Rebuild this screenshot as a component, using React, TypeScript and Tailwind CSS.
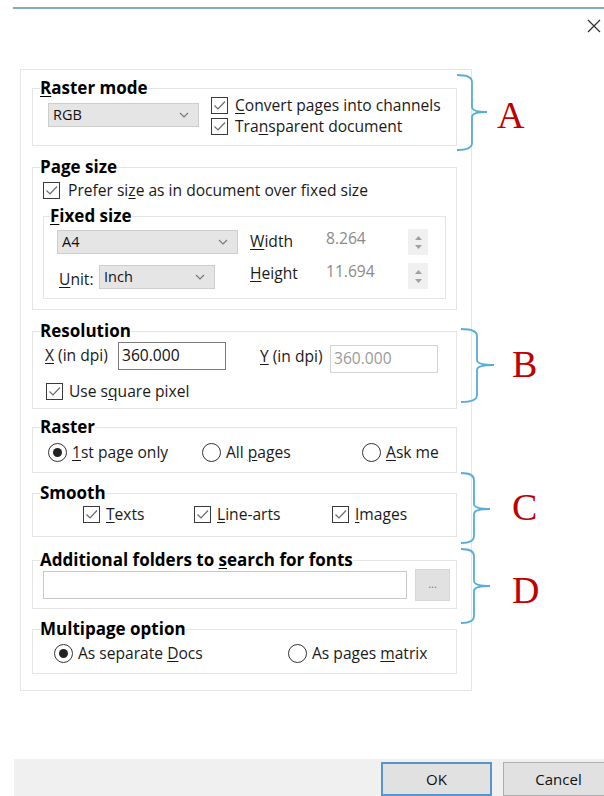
import type { ReactNode } from 'react';

function U({ children }: { children: ReactNode }) {
  return <span className="underline underline-offset-[2px]">{children}</span>;
}

function Check() {
  return (
    <div className="w-[17px] h-[17px] shrink-0 border border-[#3a3a3a] bg-white flex items-center justify-center">
      <svg width="15" height="15" viewBox="0 0 15 15">
        <polyline points="2.5,7.5 6,11 13,3.5" fill="none" stroke="#6a6a6a" strokeWidth="1.2" />
      </svg>
    </div>
  );
}

function Radio({ on }: { on?: boolean }) {
  return (
    <div className="w-[19px] h-[19px] shrink-0 rounded-full border border-[#333] bg-white flex items-center justify-center">
      {on && <div className="w-[9px] h-[9px] rounded-full bg-[#222]" />}
    </div>
  );
}

function Chevron() {
  return (
    <svg width="10" height="6" viewBox="0 0 10 6">
      <polyline points="1,1 5,5 9,1" fill="none" stroke="#777" strokeWidth="1.1" />
    </svg>
  );
}

function Select({ label, className }: { label: string; className: string }) {
  return (
    <div className={`h-[24px] shrink-0 bg-[#e5e5e5] border border-[#cdcdcd] flex items-center justify-between pl-[4px] pr-[9px] text-[14.5px] text-[#111] ${className}`}>
      <span>{label}</span>
      <Chevron />
    </div>
  );
}

function Spinner() {
  return (
    <div className="w-[20px] h-[26px] bg-[#f0f0f0] flex flex-col items-center justify-center gap-[5px]">
      <svg width="7" height="4" viewBox="0 0 7 4">
        <polygon points="0,4 3.5,0 7,4" fill="#a0a0a0" />
      </svg>
      <svg width="7" height="4" viewBox="0 0 7 4">
        <polygon points="0,0 3.5,4 7,0" fill="#a0a0a0" />
      </svg>
    </div>
  );
}

function Group({ title, className, legendClass, children }: { title: ReactNode; className: string; legendClass?: string; children: ReactNode }) {
  return (
    <fieldset className={`border border-[#e4e4e4] ${className}`}>
      <legend className={`text-[17px] font-bold leading-[18px] text-black ${legendClass ?? 'ml-[7px]'}`}>{title}</legend>
      {children}
    </fieldset>
  );
}

function Braces() {
  const brace = (y0: number, y1: number, ym: number, xl: number, xv: number, xp: number) =>
    `M ${xl} ${y0} Q ${xv} ${y0} ${xv} ${y0 + 7} L ${xv} ${ym - 5} Q ${xv} ${ym} ${xp} ${ym} Q ${xv} ${ym} ${xv} ${ym + 5} L ${xv} ${y1 - 7} Q ${xv} ${y1} ${xl} ${y1}`;
  return (
    <svg className="absolute left-0 top-0 pointer-events-none" width="604" height="796">
      <g fill="none" stroke="#58add6" strokeWidth="1.8">
        <path d={brace(75, 150, 112, 457, 472, 487)} />
        <path d={brace(329, 402, 365, 461, 477, 494)} />
        <path d={brace(473, 543, 509, 461, 474, 490)} />
        <path d={brace(549, 623, 586, 461, 474, 490)} />
      </g>
    </svg>
  );
}

export default function App() {
  const letter = "absolute text-[38px] leading-[38px] text-[#c00000] font-['Liberation_Serif',serif]";
  return (
    <div className="relative w-[604px] h-[796px] bg-white flex flex-col overflow-hidden font-['Open_Sans','Noto_Sans',sans-serif] text-[15.6px] text-[#1a1a1a]">
      <div className="ml-[13px] mt-[7px] h-[2px] bg-[#82aac0]" />
      <div className="flex justify-end pr-[3px] mt-[10px]">
        <svg width="14" height="14" viewBox="0 0 14 14">
          <path d="M1 1 L13 13 M13 1 L1 13" stroke="#333" strokeWidth="1.3" />
        </svg>
      </div>

      <div className="ml-[20px] mt-[36px] w-[452px] border border-[#e6e6e6] pl-[11px] pt-[9px] pb-[16px]">
        {/* Raster mode */}
        <Group title={<><U>R</U>aster mode</>} className="w-[425px] pb-[10px]">
          <div className="flex items-start">
            <Select label="RGB" className="mt-[6px] ml-[15px] w-[151px]" />
            <div className="ml-[12px] flex flex-col gap-[4px]">
              <div className="flex items-center h-[17px] gap-[7px]">
                <Check />
                <span><U>C</U>onvert pages into channels</span>
              </div>
              <div className="flex items-center h-[17px] gap-[7px]">
                <Check />
                <span>Tra<U>n</U>sparent document</span>
              </div>
            </div>
          </div>
        </Group>

        {/* Page size */}
        <Group title="Page size" className="w-[425px] mt-[12px] pb-[10px]">
          <div className="mt-[6px] ml-[10px] flex items-center h-[17px] gap-[8px]">
            <Check />
            <span>Prefer si<U>z</U>e as in document over fixed size</span>
          </div>
          <Group title={<><U>F</U>ixed size</>} className="w-[403px] ml-[10px] mt-[8px] pb-[9px]" legendClass="ml-[6px]">
            <div className="mt-[5px] flex items-center h-[24px]">
              <Select label="A4" className="ml-[13px] w-[181px]" />
              <span className="ml-[12px] w-[76px]"><U>W</U>idth</span>
              <span className="w-[82px] text-[#8a8a8a] -mt-[6px]">8.264</span>
              <Spinner />
            </div>
            <div className="mt-[11px] flex items-center h-[24px]">
              <span className="ml-[15px] w-[40px] mt-[6px]"><U>U</U>nit:</span>
              <Select label="Inch" className="w-[116px]" />
              <span className="ml-[35px] w-[76px] -mt-[6px]"><U>H</U>eight</span>
              <span className="w-[82px] text-[#8a8a8a] -mt-[10px]">11.694</span>
              <div className="-mt-[2px]">
                <Spinner />
              </div>
            </div>
          </Group>
        </Group>

        {/* Resolution */}
        <Group title="Resolution" className="w-[425px] mt-[12px] pb-[8px]">
          <div className="mt-[2px] flex items-start">
            <span className="ml-[12px] w-[73px] h-[28px] flex items-center"><U>X</U>&nbsp;(in dpi)</span>
            <div className="w-[108px] h-[28px] border border-[#7a7a7a] bg-white flex items-center pl-[3px] text-[#111]">360.000</div>
            <span className="ml-[34px] w-[70px] h-[28px] mt-[1px] flex items-center"><U>Y</U>&nbsp;(in dpi)</span>
            <div className="w-[108px] h-[28px] mt-[3px] border border-[#d2d2d2] bg-white flex items-center pl-[3px] text-[#9a9a9a]">360.000</div>
          </div>
          <div className="mt-[10px] ml-[13px] flex items-center h-[17px] gap-[6px]">
            <Check />
            <span>Use s<U>q</U>uare pixel</span>
          </div>
        </Group>

        {/* Raster */}
        <Group title="Raster" className="w-[425px] mt-[9px] pb-[10px]">
          <div className="mt-[7px] ml-[15px] flex items-center h-[19px]">
            <div className="w-[154px] flex items-center gap-[5px]">
              <Radio on />
              <span><U>1</U>st page only</span>
            </div>
            <div className="w-[160px] flex items-center gap-[5px]">
              <Radio />
              <span>All <U>p</U>ages</span>
            </div>
            <div className="flex items-center gap-[5px]">
              <Radio />
              <span><U>A</U>sk me</span>
            </div>
          </div>
        </Group>

        {/* Smooth */}
        <Group title="Smooth" className="w-[425px] mt-[11px] pb-[13px]">
          <div className="mt-[4px] ml-[50px] flex items-center h-[17px]">
            <div className="w-[111px] flex items-center gap-[6px]">
              <Check />
              <span><U>T</U>exts</span>
            </div>
            <div className="w-[138px] flex items-center gap-[6px]">
              <Check />
              <span><U>L</U>ine-arts</span>
            </div>
            <div className="flex items-center gap-[6px]">
              <Check />
              <span><U>I</U>mages</span>
            </div>
          </div>
        </Group>

        {/* Additional folders */}
        <Group title={<>Additional folders to <U>s</U>earch for fonts</>} className="w-[425px] mt-[14px] pb-[7px]">
          <div className="flex items-center">
            <div className="ml-[10px] w-[364px] h-[28px] border border-[#c8c8c8] bg-white" />
            <div className="ml-[8px] w-[35px] h-[32px] bg-[#e1e1e1] border border-[#d6d6d6] flex items-center justify-center text-[11px] text-[#777] pb-[2px]">...</div>
          </div>
        </Group>

        {/* Multipage */}
        <Group title="Multipage option" className="w-[425px] mt-[11px] pb-[10px]">
          <div className="mt-[6px] ml-[21px] flex items-center h-[19px]">
            <div className="w-[234px] flex items-center gap-[5px]">
              <Radio on />
              <span>As separate <U>D</U>ocs</span>
            </div>
            <div className="flex items-center gap-[5px]">
              <Radio />
              <span>As pages <U>m</U>atrix</span>
            </div>
          </div>
        </Group>
      </div>

      <div className="mt-auto ml-[14px] h-[37px] bg-[#f0f0f0] flex items-start overflow-hidden">
        <button className="ml-[367px] mt-[3px] w-[111px] h-[34px] shrink-0 bg-[#e1e1e1] border-2 border-[#5a94cc] text-[15px] text-[#111] flex items-center justify-center">OK</button>
        <button className="ml-[11px] mt-[3px] w-[111px] h-[34px] shrink-0 bg-[#e1e1e1] border border-[#adadad] text-[15px] text-[#111] flex items-center justify-center">Cancel</button>
      </div>

      <Braces />
      <span className={`${letter} left-[497px] top-[96px]`}>A</span>
      <span className={`${letter} left-[512px] top-[345px]`}>B</span>
      <span className={`${letter} left-[512px] top-[488px]`}>C</span>
      <span className={`${letter} left-[512px] top-[571px]`}>D</span>
    </div>
  );
}
